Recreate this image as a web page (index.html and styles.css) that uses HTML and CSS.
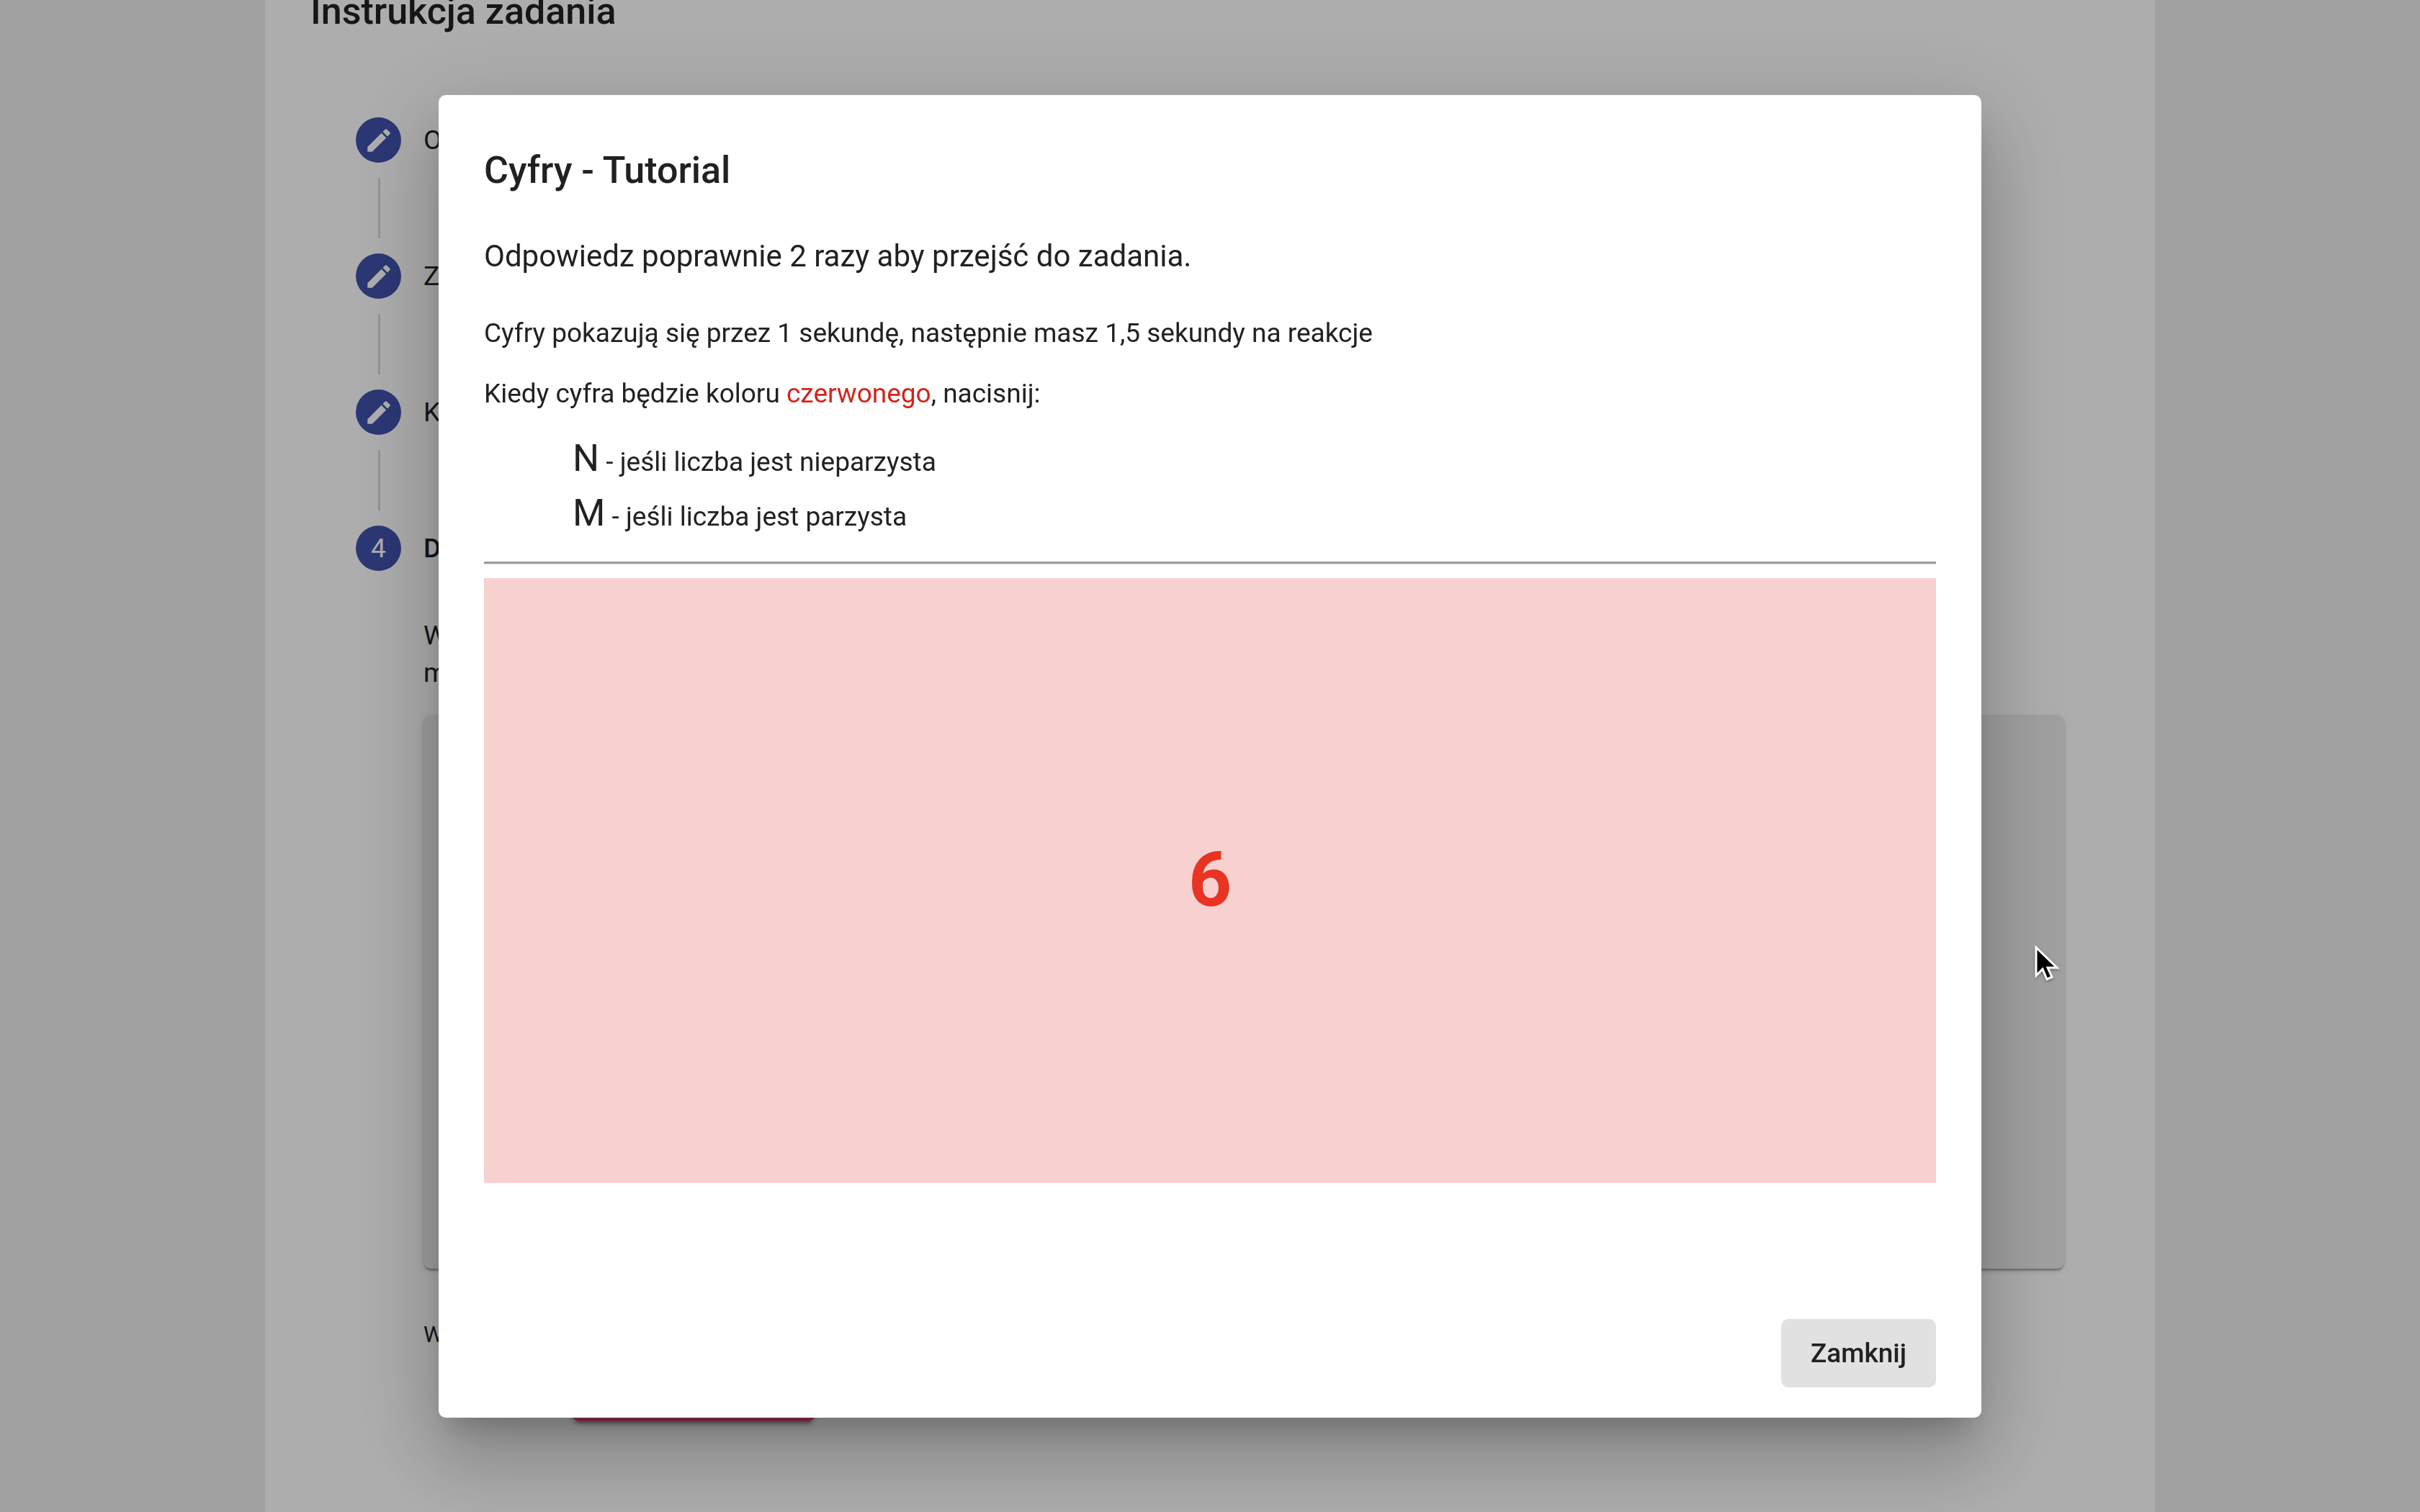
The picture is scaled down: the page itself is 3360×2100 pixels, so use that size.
FILE: index.html
```html
<!DOCTYPE html>
<html lang="pl">
<head>
<meta charset="utf-8">
<title>Cyfry - Tutorial</title>
<link rel="stylesheet" href="styles.css">
</head>
<body>
<svg class="sprite" aria-hidden="true">
  <symbol id="edit" viewBox="0 0 24 24"><path d="M3 17.25V21h3.75L17.81 9.94l-3.75-3.75L3 17.25zM20.71 7.04c.39-.39.39-1.02 0-1.41l-2.34-2.34c-.39-.39-1.02-.39-1.41 0l-1.83 1.83 3.75 3.75 1.83-1.83z"/></symbol>
</svg>

<main class="card">
  <h1 class="heading">Instrukcja zadania</h1>
  <ol class="stepper">
    <li class="step">
      <div class="step-header"><span class="step-icon"><svg><use href="#edit"/></svg></span><span>O</span></div>
      <div class="connector"></div>
    </li>
    <li class="step">
      <div class="step-header"><span class="step-icon"><svg><use href="#edit"/></svg></span><span>Z</span></div>
      <div class="connector"></div>
    </li>
    <li class="step">
      <div class="step-header"><span class="step-icon"><svg><use href="#edit"/></svg></span><span>K</span></div>
      <div class="connector"></div>
    </li>
    <li class="step">
      <div class="step-header step-active"><span class="step-icon">4</span><span>D</span></div>
      <div class="step-content">
        <p class="step-text">W<br>m</p>
        <div class="panel"></div>
        <p class="hint">W</p>
        <button class="start" type="button" aria-label="Start"></button>
      </div>
    </li>
  </ol>
</main>

<div class="backdrop">
  <section class="dialog" role="dialog" aria-modal="true" aria-labelledby="dialog-title">
    <h2 class="heading" id="dialog-title">Cyfry - Tutorial</h2>
    <h3 class="lead">Odpowiedz poprawnie 2 razy aby przejść do zadania.</h3>
    <p class="info">Cyfry pokazują się przez 1 sekundę, następnie masz 1,5 sekundy na reakcje</p>
    <p class="info">Kiedy cyfra będzie koloru <span class="red">czerwonego</span>, nacisnij:</p>
    <ul class="keys">
      <li><span class="key">N</span> - jeśli liczba jest nieparzysta</li>
      <li><span class="key">M</span> - jeśli liczba jest parzysta</li>
    </ul>
    <hr class="rule">
    <div class="board">6</div>
    <div class="actions"><button class="close" type="button">Zamknij</button></div>
  </section>
</div>

<svg class="cursor" viewBox="0 0 34 52" aria-hidden="true">
  <path d="M2 3V42L11 33L17 47L24 44L18 31H31Z" fill="#000" stroke="#fff" stroke-width="3"/>
</svg>
</body>
</html>
```

FILE: styles.css
```css
* {
  box-sizing: border-box;
  margin: 0;
  padding: 0;
}

body {
  height: 100vh;
  overflow: hidden;
  background: #eee;
  color: #212121;
  font: 400 37px/52px Roboto, sans-serif;
}

.sprite {
  display: none;
}

/* The page behind the dialog is scrolled past the top of the card. */
.card {
  max-width: 2624px;
  margin: -89px auto 0;
  padding: 63px;
  background: #fff;
}

.heading {
  font-size: 52px;
  line-height: 84px;
  font-weight: 500;
}

/* Stepper */
.stepper {
  list-style: none;
  padding: 105px 63px 63px;
}

.step-header {
  display: flex;
  align-items: center;
  gap: 31px;
}

.step-active {
  font-weight: 500;
}

.step-icon {
  display: flex;
  align-items: center;
  justify-content: center;
  width: 63px;
  height: 63px;
  border-radius: 50%;
  background: #4151ac;
  color: #fff;
  font-weight: 400;
}

.step-icon svg {
  width: 42px;
  height: 42px;
  fill: #fff;
}

.connector {
  width: 3px;
  height: 84px;
  margin: 21px 31px;
  background: #dadada;
}

.step-content {
  padding: 64px 0 0 94px;
}

.panel {
  height: 769px;
  margin: 32px 0 66px;
  border-radius: 10px;
  background: #ececec;
  box-shadow: 0 5px 3px -3px rgba(0, 0, 0, .2), 0 3px 3px 0 rgba(0, 0, 0, .14), 0 3px 8px 0 rgba(0, 0, 0, .12);
}

.hint {
  font-size: 31px;
}

.start {
  display: block;
  width: 338px;
  height: 94px;
  margin-left: 206px;
  border: 0;
  border-radius: 10px;
  background: #e5457d;
  box-shadow: 0 8px 3px -5px rgba(0, 0, 0, .2), 0 5px 5px 0 rgba(0, 0, 0, .14), 0 3px 13px 0 rgba(0, 0, 0, .12);
}

/* Dialog */
.backdrop {
  position: fixed;
  inset: 0;
  display: flex;
  align-items: center;
  justify-content: center;
  background: rgba(0, 0, 0, .32);
}

.dialog {
  width: 2142px;
  max-width: 90vw;
  padding: 63px 63px 42px;
  border-radius: 10px;
  background: #fff;
  box-shadow: 0 29px 39px -18px rgba(0, 0, 0, .2), 0 63px 100px 8px rgba(0, 0, 0, .14), 0 24px 121px 21px rgba(0, 0, 0, .12);
}

.lead {
  margin: 40px 0 44px;
  font-size: 42px;
  line-height: 74px;
  font-weight: 400;
}

.info {
  margin-bottom: 32px;
}

.red {
  color: #d3241c;
}

.keys {
  list-style: none;
  margin-top: -6px;
  padding-left: 123px;
}

.key {
  font-size: 52px;
  line-height: 76px;
}

.rule {
  height: 5px;
  margin: 29px 0 18px;
  border: 0;
  border-top: 3px solid #9a9a9a;
  border-bottom: 2px solid #eee;
}

.board {
  display: flex;
  align-items: center;
  justify-content: center;
  height: 840px;
  background: #f7d1d0;
  color: #e93323;
  font-size: 105px;
  font-weight: 700;
}

.actions {
  display: flex;
  justify-content: flex-end;
  margin-top: 189px;
}

.close {
  height: 95px;
  padding: 0 41px;
  border: 0;
  border-radius: 10px;
  background: #e1e1e1;
  color: #212121;
  font: 500 37px/95px Roboto, sans-serif;
}

/* Mouse pointer */
.cursor {
  position: fixed;
  left: 2825px;
  top: 1313px;
  width: 34px;
  height: 52px;
  filter: drop-shadow(0 2px 2px rgba(0, 0, 0, .3));
}
```
